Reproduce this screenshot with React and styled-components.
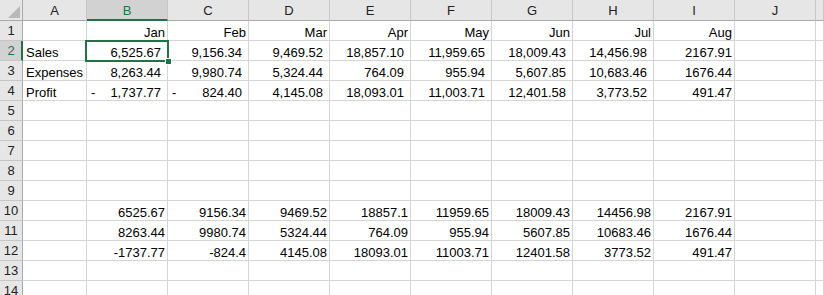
import React from "react";
import styled, { createGlobalStyle, css } from "styled-components";

const Global = createGlobalStyle`
  html, body { margin: 0; padding: 0; background: #fff; overflow: hidden; }
  body { font-family: "Liberation Sans", Arial, sans-serif; }
`;

const GREEN = "#217346";
const GRID = "#d4d4d4";

const Sheet = styled.div`
  display: grid;
  grid-template-columns: 23px 64px repeat(9, 81px) 1fr;
  grid-auto-rows: 20px;
  grid-template-rows: 21px;
  width: 824px;
  height: 295px;
  overflow: hidden;
  font-family: "Liberation Sans", Arial, sans-serif;
  font-size: 13px;
  color: #000;
`;

const Corner = styled.div`
  position: relative;
  background: #e6e6e6;
  border-right: 1px solid #ababab;
  border-bottom: 1px solid #ababab;
  box-sizing: border-box;
  svg { position: absolute; right: 2px; bottom: 2px; }
`;

const ColHeader = styled.div`
  box-sizing: border-box;
  display: flex;
  align-items: center;
  justify-content: center;
  background: ${(p) => (p.$selected ? "#d2d2d2" : "#e6e6e6")};
  border-right: 1px solid #c6c6c6;
  border-bottom: ${(p) => (p.$selected ? `2px solid ${GREEN}` : "1px solid #ababab")};
  color: ${(p) => (p.$selected ? GREEN : "#222")};
  padding-top: ${(p) => (p.$selected ? "1px" : "0")};
  font-size: 13px;
`;

const RowHeader = styled.div`
  box-sizing: border-box;
  display: flex;
  align-items: center;
  justify-content: center;
  background: ${(p) => (p.$selected ? "#d2d2d2" : "#e6e6e6")};
  border-right: ${(p) => (p.$selected ? `2px solid ${GREEN}` : "1px solid #ababab")};
  border-bottom: 1px solid #c6c6c6;
  color: ${(p) => (p.$selected ? GREEN : "#222")};
  padding-left: ${(p) => (p.$selected ? "1px" : "0")};
  font-size: 13px;
`;

const Cell = styled.div`
  position: relative;
  box-sizing: border-box;
  display: flex;
  align-items: flex-end;
  border-right: 1px solid ${GRID};
  border-bottom: 1px solid ${GRID};
  line-height: 15px;
  white-space: nowrap;
  padding: 0 3px 0 3px;
  justify-content: ${(p) => (p.$align === "right" ? "flex-end" : "flex-start")};
  ${(p) =>
    p.$kind === "acct" &&
    css`
      justify-content: space-between;
      padding: 0 6px 0 4px;
    `}
  ${(p) =>
    p.$kind === "acctpos" &&
    css`
      justify-content: flex-end;
      padding: 0 6px 0 4px;
    `}
  ${(p) =>
    p.$kind === "num" &&
    css`
      justify-content: flex-end;
      padding: 0 2px 0 3px;
    `}
`;

const Selection = styled.div`
  position: absolute;
  left: -2px;
  top: -1px;
  right: -2px;
  bottom: -2px;
  border: 2px solid ${GREEN};
  pointer-events: none;
  z-index: 2;
`;

const FillHandle = styled.div`
  position: absolute;
  right: -5px;
  bottom: -5px;
  width: 5px;
  height: 5px;
  background: ${GREEN};
  border: 1px solid #fff;
`;

const cols = ["A", "B", "C", "D", "E", "F", "G", "H", "I", "J"];

// each row: array of cells for columns A..J (+ partial K)
// cell: null | {t, kind}
const months = ["Jan", "Feb", "Mar", "Apr", "May", "Jun", "Jul", "Aug"];
const sales = ["6,525.67", "9,156.34", "9,469.52", "18,857.10", "11,959.65", "18,009.43", "14,456.98"];
const expenses = ["8,263.44", "9,980.74", "5,324.44", "764.09", "955.94", "5,607.85", "10,683.46"];
const profit = ["1,737.77", "824.40", "4,145.08", "18,093.01", "11,003.71", "12,401.58", "3,773.52"];
const raw1 = ["6525.67", "9156.34", "9469.52", "18857.1", "11959.65", "18009.43", "14456.98", "2167.91"];
const raw2 = ["8263.44", "9980.74", "5324.44", "764.09", "955.94", "5607.85", "10683.46", "1676.44"];
const raw3 = ["-1737.77", "-824.4", "4145.08", "18093.01", "11003.71", "12401.58", "3773.52", "491.47"];

const empty = () => Array(11).fill(null);

const rows = [];
// row 1
rows.push([null, ...months.map((m) => ({ t: m, kind: "num" })), null, null]);
// row 2
rows.push([
  { t: "Sales" },
  ...sales.map((v) => ({ t: v, kind: "acctpos" })),
  { t: "2167.91", kind: "num" },
  null,
  null,
]);
rows.push([
  { t: "Expenses" },
  ...expenses.map((v) => ({ t: v, kind: "acctpos" })),
  { t: "1676.44", kind: "num" },
  null,
  null,
]);
rows.push([
  { t: "Profit" },
  ...profit.map((v, i) => ({ t: v, kind: i < 2 ? "acct" : "acctpos", neg: i < 2 })),
  { t: "491.47", kind: "num" },
  null,
  null,
]);
for (let i = 0; i < 5; i++) rows.push(empty());
rows.push([null, ...raw1.map((v) => ({ t: v, kind: "num" })), null, null]);
rows.push([null, ...raw2.map((v) => ({ t: v, kind: "num" })), null, null]);
rows.push([null, ...raw3.map((v) => ({ t: v, kind: "num" })), null, null]);
rows.push(empty());
rows.push(empty());

export default function App() {
  return (
    <>
      <Global />
      <Sheet>
        <Corner>
          <svg width="12" height="12" viewBox="0 0 12 12">
            <polygon points="12,0 12,12 0,12" fill="#b8b8b8" />
          </svg>
        </Corner>
        {cols.map((c) => (
          <ColHeader key={c} $selected={c === "B"}>
            {c}
          </ColHeader>
        ))}
        <ColHeader />
        {rows.map((r, ri) => (
          <React.Fragment key={ri}>
            <RowHeader $selected={ri === 1}>{ri + 1}</RowHeader>
            {r.map((cell, ci) => {
              const selected = ri === 1 && ci === 1;
              if (!cell)
                return (
                  <Cell key={ci}>
                    {selected && (
                      <Selection>
                        <FillHandle />
                      </Selection>
                    )}
                  </Cell>
                );
              return (
                <Cell key={ci} $kind={cell.kind}>
                  {cell.kind === "acct" ? (
                    <>
                      <span>-</span>
                      <span>{cell.t}</span>
                    </>
                  ) : (
                    cell.t
                  )}
                  {selected && (
                    <Selection>
                      <FillHandle />
                    </Selection>
                  )}
                </Cell>
              );
            })}
          </React.Fragment>
        ))}
      </Sheet>
    </>
  );
}
